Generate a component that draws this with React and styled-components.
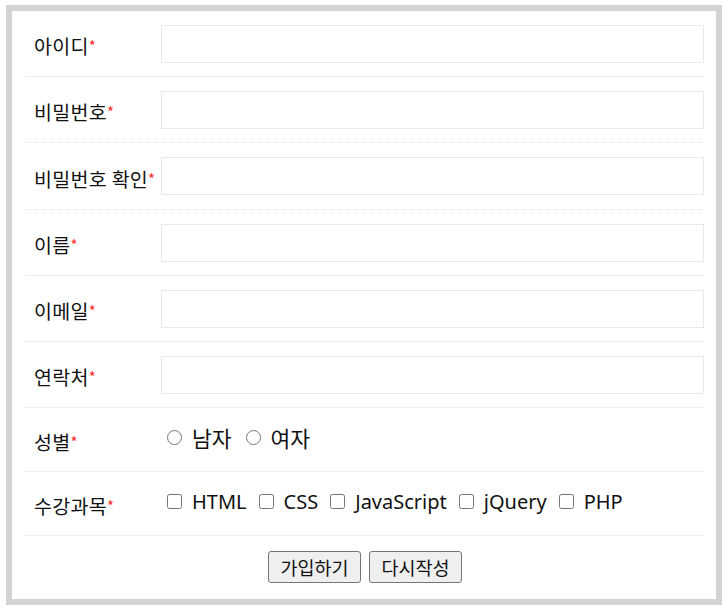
import styled, { createGlobalStyle } from "styled-components";

const GlobalStyle = createGlobalStyle`
  body {
    margin: 0;
    background: white;
    font-family: "Noto Sans", "Noto Sans CJK KR", sans-serif;
    color: #111;
  }
`;

const FormBox = styled.form`
  box-sizing: border-box;
  width: 716px;
  height: 600px;
  margin: 5px 0 0 6px;
  border: 6px solid #d3d3d3;
  padding: 0 12px 0 14px;
  display: flex;
  flex-direction: column;
`;

const Row = styled.div`
  display: grid;
  grid-template-columns: 135px 1fr;
  align-items: center;
  height: ${(p) => p.$h}px;
  border-bottom: 1px dotted #e0e0e0;
`;

const Label = styled.label`
  padding-left: 8px;
  padding-top: 4px;
  font-family: "Noto Sans CJK KR", sans-serif;
  font-size: 19.5px;
  letter-spacing: 0.3px;
  white-space: nowrap;
  color: #111;
`;

const Star = styled.span`
  color: #ff2a2a;
  font-size: 15px;
  vertical-align: 2px;
`;

const TextInput = styled.input`
  box-sizing: border-box;
  width: 100%;
  height: 38px;
  border: 1px solid #e8e8e8;
  outline: none;
  font-size: 16px;
`;

const Options = styled.div`
  display: flex;
  align-items: center;
  gap: ${(p) => p.$gap}px;
  padding-left: 6px;
  padding-bottom: 5px;
  font-size: 20px;
  color: #111;
`;

const Option = styled.label`
  display: flex;
  align-items: center;
  gap: 10px;
  white-space: nowrap;

  input {
    margin: 0;
    width: 15px;
    height: 15px;
  }
`;

const KoText = styled.span`
  font-family: "Noto Sans CJK KR", sans-serif;
  font-size: 21.5px;
`;

const Buttons = styled.div`
  flex: 1;
  display: flex;
  justify-content: center;
  align-items: center;
  gap: 8px;
  padding-bottom: 2px;
`;

const Button = styled.button`
  box-sizing: border-box;
  height: 32px;
  width: 93px;
  padding: 0;
  font-family: "Noto Sans CJK KR", sans-serif;
  font-size: 18.5px;
  color: #111;
  background: #efefef;
  border: 1px solid #767676;
  border-radius: 3px;
`;

const fields = ["아이디", "비밀번호", "비밀번호 확인", "이름", "이메일", "연락처"];
const courses = ["HTML", "CSS", "JavaScript", "jQuery", "PHP"];

export default function App() {
  return (
    <>
      <GlobalStyle />
      <FormBox onSubmit={(e) => e.preventDefault()}>
        {fields.map((f, i) => (
          <Row key={f} $h={i === 2 ? 66 : 65}>
            <Label>
              {f}
              <Star>*</Star>
            </Label>
            <TextInput type={f.startsWith("비밀번호") ? "password" : "text"} />
          </Row>
        ))}
        <Row $h={63}>
          <Label>
            성별<Star>*</Star>
          </Label>
          <Options $gap={14}>
            <Option>
              <input type="radio" name="gender" />
              <KoText>남자</KoText>
            </Option>
            <Option>
              <input type="radio" name="gender" />
              <KoText>여자</KoText>
            </Option>
          </Options>
        </Row>
        <Row $h={63}>
          <Label>
            수강과목<Star>*</Star>
          </Label>
          <Options $gap={12}>
            {courses.map((c) => (
              <Option key={c}>
                <input type="checkbox" />
                {c}
              </Option>
            ))}
          </Options>
        </Row>
        <Buttons>
          <Button type="submit">가입하기</Button>
          <Button type="reset">다시작성</Button>
        </Buttons>
      </FormBox>
    </>
  );
}
